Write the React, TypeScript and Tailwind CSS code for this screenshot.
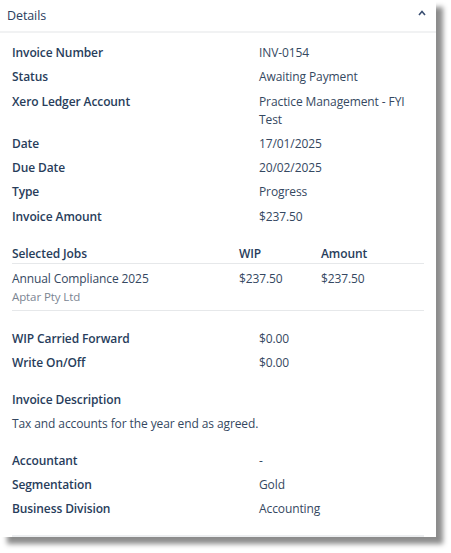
import React from 'react';

const font = { fontFamily: '"Open Sans", "Noto Sans", sans-serif' };

type Row = { label: string; value: string };

const topRows: Row[] = [
  { label: 'Invoice Number', value: 'INV-0154' },
  { label: 'Status', value: 'Awaiting Payment' },
  { label: 'Xero Ledger Account', value: 'Practice Management - FYI Test' },
  { label: 'Date', value: '17/01/2025' },
  { label: 'Due Date', value: '20/02/2025' },
  { label: 'Type', value: 'Progress' },
  { label: 'Invoice Amount', value: '$237.50' },
];

const carryRows: Row[] = [
  { label: 'WIP Carried Forward', value: '$0.00' },
  { label: 'Write On/Off', value: '$0.00' },
];

const bottomRows: Row[] = [
  { label: 'Accountant', value: '-' },
  { label: 'Segmentation', value: 'Gold' },
  { label: 'Business Division', value: 'Accounting' },
];

function Rows({ rows }: { rows: Row[] }) {
  return (
    <div className="flex flex-col gap-[6px]">
      {rows.map((row) => (
        <div key={row.label} className="grid grid-cols-[247px_1fr] leading-[18px]">
          <span className="font-semibold text-[#283d5b]">{row.label}</span>
          <span className="text-[#354861]">{row.value}</span>
        </div>
      ))}
    </div>
  );
}

export default function App() {
  return (
    <div className="h-[553px] w-[451px] bg-white" style={font}>
      <div className="h-[537px] w-[436px] bg-white text-[12px] tracking-[-0.1px] shadow-[7px_7px_5px_rgba(0,0,0,0.45)]">
        <div className="flex h-[33px] items-center justify-between border-b-2 border-[#f1f2f3] pl-[7px] pr-[10px]">
          <span className="mt-[1px] text-[12.5px] text-[#2b4060]">Details</span>
          <svg width="8" height="6" viewBox="0 0 8 6" className="mb-[6px]">
            <polyline points="1,5 4,1.5 7,5" fill="none" stroke="#3a4f72" strokeWidth="1.6" />
          </svg>
        </div>

        <div className="px-[12px] pt-[11px]">
          <div className="flex flex-col gap-[6.3px]">
            {topRows.map((row) => (
              <div key={row.label} className="grid grid-cols-[247px_1fr] leading-[18px]">
                <span className="font-semibold text-[#283d5b]">{row.label}</span>
                <span className="text-[#354861]">{row.value}</span>
              </div>
            ))}
          </div>

          <div className="mt-[19px]">
            <div className="grid grid-cols-[227px_82px_1fr] border-b border-[#e6e8ea] leading-[18px]">
              <span className="font-semibold text-[#283d5b]">Selected Jobs</span>
              <span className="font-semibold text-[#283d5b]">WIP</span>
              <span className="font-semibold text-[#283d5b]">Amount</span>
            </div>
            <div className="grid grid-cols-[227px_82px_1fr] border-b border-[#e6e8ea] pt-[6px] pb-[4px] leading-[18px]">
              <div className="flex flex-col">
                <span className="text-[#354861]">Annual Compliance 2025</span>
                <span className="text-[11.5px] text-[#7b8592]">Aptar Pty Ltd</span>
              </div>
              <span className="text-[#354861]">$237.50</span>
              <span className="text-[#354861]">$237.50</span>
            </div>
          </div>

          <div className="mt-[19px]">
            <Rows rows={carryRows} />
          </div>

          <div className="mt-[19px] flex flex-col gap-[6px] leading-[18px]">
            <span className="font-semibold text-[#283d5b]">Invoice Description</span>
            <span className="text-[#354861]">Tax and accounts for the year end as agreed.</span>
          </div>

          <div className="mt-[19px]">
            <Rows rows={bottomRows} />
          </div>

          <div className="mt-[17px] h-[2px] bg-[#eceef0]" />
        </div>
      </div>
    </div>
  );
}
